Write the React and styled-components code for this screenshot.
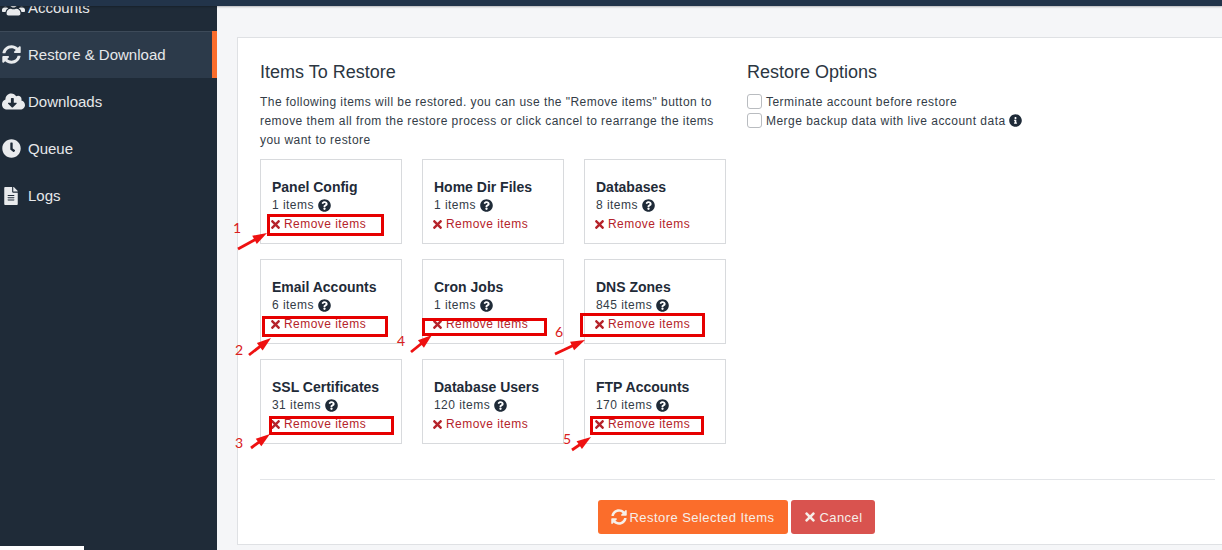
import styled, { createGlobalStyle } from 'styled-components';
import {
  FaSyncAlt,
  FaCloudDownloadAlt,
  FaClock,
  FaFileAlt,
  FaUsers,
  FaQuestionCircle,
  FaInfoCircle,
  FaTimes,
} from 'react-icons/fa';

const GlobalStyle = createGlobalStyle`
  html, body {
    margin: 0;
    padding: 0;
    background: #f5f6f8;
  }
  * {
    box-sizing: border-box;
  }
`;

const cards = [
  ['Panel Config', '1 items'],
  ['Home Dir Files', '1 items'],
  ['Databases', '8 items'],
  ['Email Accounts', '6 items'],
  ['Cron Jobs', '1 items'],
  ['DNS Zones', '845 items'],
  ['SSL Certificates', '31 items'],
  ['Database Users', '120 items'],
  ['FTP Accounts', '170 items'],
];

const menu = [
  { label: 'Accounts', icon: <FaUsers />, size: 23 },
  { label: 'Restore & Download', icon: <FaSyncAlt />, size: 19, active: true },
  { label: 'Downloads', icon: <FaCloudDownloadAlt />, size: 23 },
  { label: 'Queue', icon: <FaClock />, size: 19 },
  { label: 'Logs', icon: <FaFileAlt />, size: 18 },
];

const marks = [
  { x: 267, y: 214, w: 117, h: 22 },
  { x: 262, y: 316, w: 126, h: 21 },
  { x: 422, y: 318, w: 125, h: 18 },
  { x: 269, y: 416, w: 125, h: 19 },
  { x: 580, y: 313, w: 125, h: 24 },
  { x: 590, y: 416, w: 114, h: 19 },
];

const numbers = [
  { n: 1, x: 233, y: 220 },
  { n: 2, x: 235, y: 342 },
  { n: 4, x: 397, y: 333 },
  { n: 3, x: 235, y: 435 },
  { n: 6, x: 555, y: 324 },
  { n: 5, x: 563, y: 431 },
];

const arrows = [
  [238, 249, 267, 233],
  [249, 355, 271, 338],
  [411, 352, 432, 335],
  [251, 448, 270, 434],
  [555, 354, 585, 340],
  [572, 450, 591, 437],
];

function Arrow({ from, to }) {
  const [x1, y1] = from;
  const [x2, y2] = to;
  const a = Math.atan2(y2 - y1, x2 - x1);
  const head = (len, off) => `${x2 - len * Math.cos(a + off)},${y2 - len * Math.sin(a + off)}`;
  return (
    <g>
      <line x1={x1} y1={y1} x2={x2 - 6 * Math.cos(a)} y2={y2 - 6 * Math.sin(a)} stroke="#ee1111" strokeWidth="2.8" />
      <polygon points={`${x2},${y2} ${head(15, 0.32)} ${head(15, -0.32)}`} fill="#ee1111" />
    </g>
  );
}

export default function App() {
  return (
    <>
      <GlobalStyle />
      <Page>
        <TopBar />
        <Body>
          <Sidebar>
            <Menu>
              {menu.map((item) => (
                <MenuItem key={item.label} $active={item.active}>
                  <MenuIcon $size={item.size}>{item.icon}</MenuIcon>
                  {item.label}
                </MenuItem>
              ))}
            </Menu>
          </Sidebar>
          <Content>
            <Panel>
              <Columns>
                <LeftColumn>
                  <Heading>Items To Restore</Heading>
                  <Intro>
                    The following items will be restored. you can use the "Remove items" button to remove them all from
                    the restore process or click cancel to rearrange the items you want to restore
                  </Intro>
                  <CardGrid>
                    {cards.map(([title, count]) => (
                      <Card key={title}>
                        <CardTitle>{title}</CardTitle>
                        <CardCount>
                          {count} <FaQuestionCircle />
                        </CardCount>
                        <RemoveLink>
                          <FaTimes /> Remove items
                        </RemoveLink>
                      </Card>
                    ))}
                  </CardGrid>
                </LeftColumn>
                <RightColumn>
                  <Heading>Restore Options</Heading>
                  <OptionList>
                    <Option>
                      <CheckBox />
                      Terminate account before restore
                    </Option>
                    <Option>
                      <CheckBox />
                      Merge backup data with live account data <FaInfoCircle />
                    </Option>
                  </OptionList>
                </RightColumn>
              </Columns>
              <Footer>
                <Button $color="#fb6d2b" $width={190} $icon={16}>
                  <FaSyncAlt /> Restore Selected Items
                </Button>
                <Button $color="#d9534f" $width={84} $icon={14}>
                  <FaTimes /> Cancel
                </Button>
              </Footer>
            </Panel>
          </Content>
        </Body>
        <Annotations viewBox="0 0 1222 550">
          {arrows.map(([x1, y1, x2, y2]) => (
            <Arrow key={x1} from={[x1, y1]} to={[x2, y2]} />
          ))}
        </Annotations>
        {marks.map((m) => (
          <Mark key={m.x + '-' + m.y} $x={m.x} $y={m.y} $w={m.w} $h={m.h} />
        ))}
        {numbers.map((item) => (
          <MarkNumber key={item.n} $x={item.x} $y={item.y}>
            {item.n}
          </MarkNumber>
        ))}
        <BottomStrip />
      </Page>
    </>
  );
}

const Page = styled.div`
  position: relative;
  width: 1222px;
  height: 550px;
  overflow: hidden;
  display: flex;
  flex-direction: column;
  font-family: 'Liberation Sans', Arial, sans-serif;
  background: #f5f6f8;
`;

const TopBar = styled.div`
  flex: none;
  height: 6px;
  background: #22344a;
  box-shadow: 0 1px 2px rgba(0, 0, 0, 0.25);
  position: relative;
  z-index: 1;
`;

const Body = styled.div`
  flex: 1;
  display: flex;
  min-height: 0;
`;

const Sidebar = styled.aside`
  flex: none;
  width: 217px;
  background: #1f2b38;
  overflow: hidden;
`;

const Menu = styled.div`
  margin-top: -22px;
`;

const MenuItem = styled.div`
  height: 47px;
  display: flex;
  align-items: center;
  font-size: 15px;
  color: #e6e8ea;
  background: ${(p) => (p.$active ? '#2c3a4a' : 'transparent')};
  box-shadow: ${(p) => (p.$active ? 'inset 0 1px 0 #3d4a59' : 'none')};
  border-right: 5px solid ${(p) => (p.$active ? '#fb6d2b' : 'transparent')};
`;

const MenuIcon = styled.span`
  flex: none;
  width: 28px;
  padding-left: 2px;
  display: flex;
  align-items: center;
  font-size: ${(p) => p.$size}px;
  color: #e9ebed;
`;

const Content = styled.main`
  flex: 1;
  min-width: 0;
  padding: 31px 0 5px 20px;
`;

const Panel = styled.section`
  width: 1010px;
  height: 100%;
  padding: 22px 0 0 22px;
  background: #fff;
  border: 1px solid #dfe1e4;
`;

const Columns = styled.div`
  display: flex;
  height: 419px;
`;

const LeftColumn = styled.div`
  flex: none;
  width: 487px;
`;

const RightColumn = styled.div`
  flex: 1;
`;

const Heading = styled.h3`
  margin: 0;
  font-size: 18px;
  font-weight: 400;
  line-height: 24px;
  color: #2b3642;
`;

const Intro = styled.p`
  width: 465px;
  margin: 9px 0 9px;
  font-size: 12px;
  line-height: 19px;
  letter-spacing: 0.45px;
  color: #333c47;
`;

const CardGrid = styled.div`
  display: grid;
  grid-template-columns: repeat(3, 142px);
  grid-auto-rows: 85px;
  column-gap: 20px;
  row-gap: 15px;
`;

const Card = styled.div`
  padding: 19px 0 0 11px;
  border: 1px solid #d8dadd;
`;

const CardTitle = styled.div`
  font-size: 14px;
  font-weight: 700;
  line-height: 17px;
  color: #1f2b38;
`;

const CardCount = styled.div`
  display: flex;
  align-items: center;
  gap: 4px;
  margin-top: 1px;
  font-size: 12px;
  line-height: 17px;
  letter-spacing: 0.45px;
  color: #333c47;

  svg {
    font-size: 13px;
    color: #1f2b38;
  }
`;

const RemoveLink = styled.div`
  display: flex;
  align-items: center;
  gap: 2px;
  margin-top: 2px;
  font-size: 12px;
  line-height: 17px;
  letter-spacing: 0.45px;
  color: #b5232a;

  svg {
    margin-left: -3px;
    font-size: 13px;
  }
`;

const OptionList = styled.div`
  margin-top: 8px;
`;

const Option = styled.div`
  display: flex;
  align-items: center;
  gap: 4px;
  height: 19px;
  font-size: 12px;
  letter-spacing: 0.47px;
  color: #333c47;

  svg {
    margin-left: -1px;
    font-size: 13px;
    color: #1f2b38;
  }
`;

const CheckBox = styled.span`
  flex: none;
  width: 15px;
  height: 15px;
  background: #fff;
  border: 1px solid #b9bcc0;
  border-radius: 3px;
`;

const Footer = styled.div`
  width: 955px;
  height: 66px;
  display: flex;
  justify-content: center;
  gap: 3px;
  padding: 20px 2px 0 0;
  border-top: 1px solid #e3e5e8;
`;

const Button = styled.button`
  width: ${(p) => p.$width}px;
  height: 34px;
  padding: 0;
  display: flex;
  align-items: center;
  justify-content: center;
  gap: 2px;
  border: 0;
  border-radius: 3px;
  font-family: inherit;
  font-size: 13px;
  letter-spacing: 0.45px;
  color: #f6efe9;
  background: ${(p) => p.$color};

  svg {
    font-size: ${(p) => p.$icon}px;
  }
`;

const Annotations = styled.svg`
  position: absolute;
  top: 0;
  left: 0;
  width: 1222px;
  height: 550px;
  pointer-events: none;
`;

const Mark = styled.div`
  position: absolute;
  left: ${(p) => p.$x}px;
  top: ${(p) => p.$y}px;
  width: ${(p) => p.$w}px;
  height: ${(p) => p.$h}px;
  border: 3px solid #e60000;
`;

const MarkNumber = styled.span`
  position: absolute;
  left: ${(p) => p.$x}px;
  top: ${(p) => p.$y}px;
  font-family: Lato, sans-serif;
  font-size: 14px;
  line-height: 16px;
  color: #d92020;
`;

const BottomStrip = styled.div`
  position: absolute;
  left: 0;
  bottom: 0;
  width: 84px;
  height: 4px;
  background: #fff;
`;
